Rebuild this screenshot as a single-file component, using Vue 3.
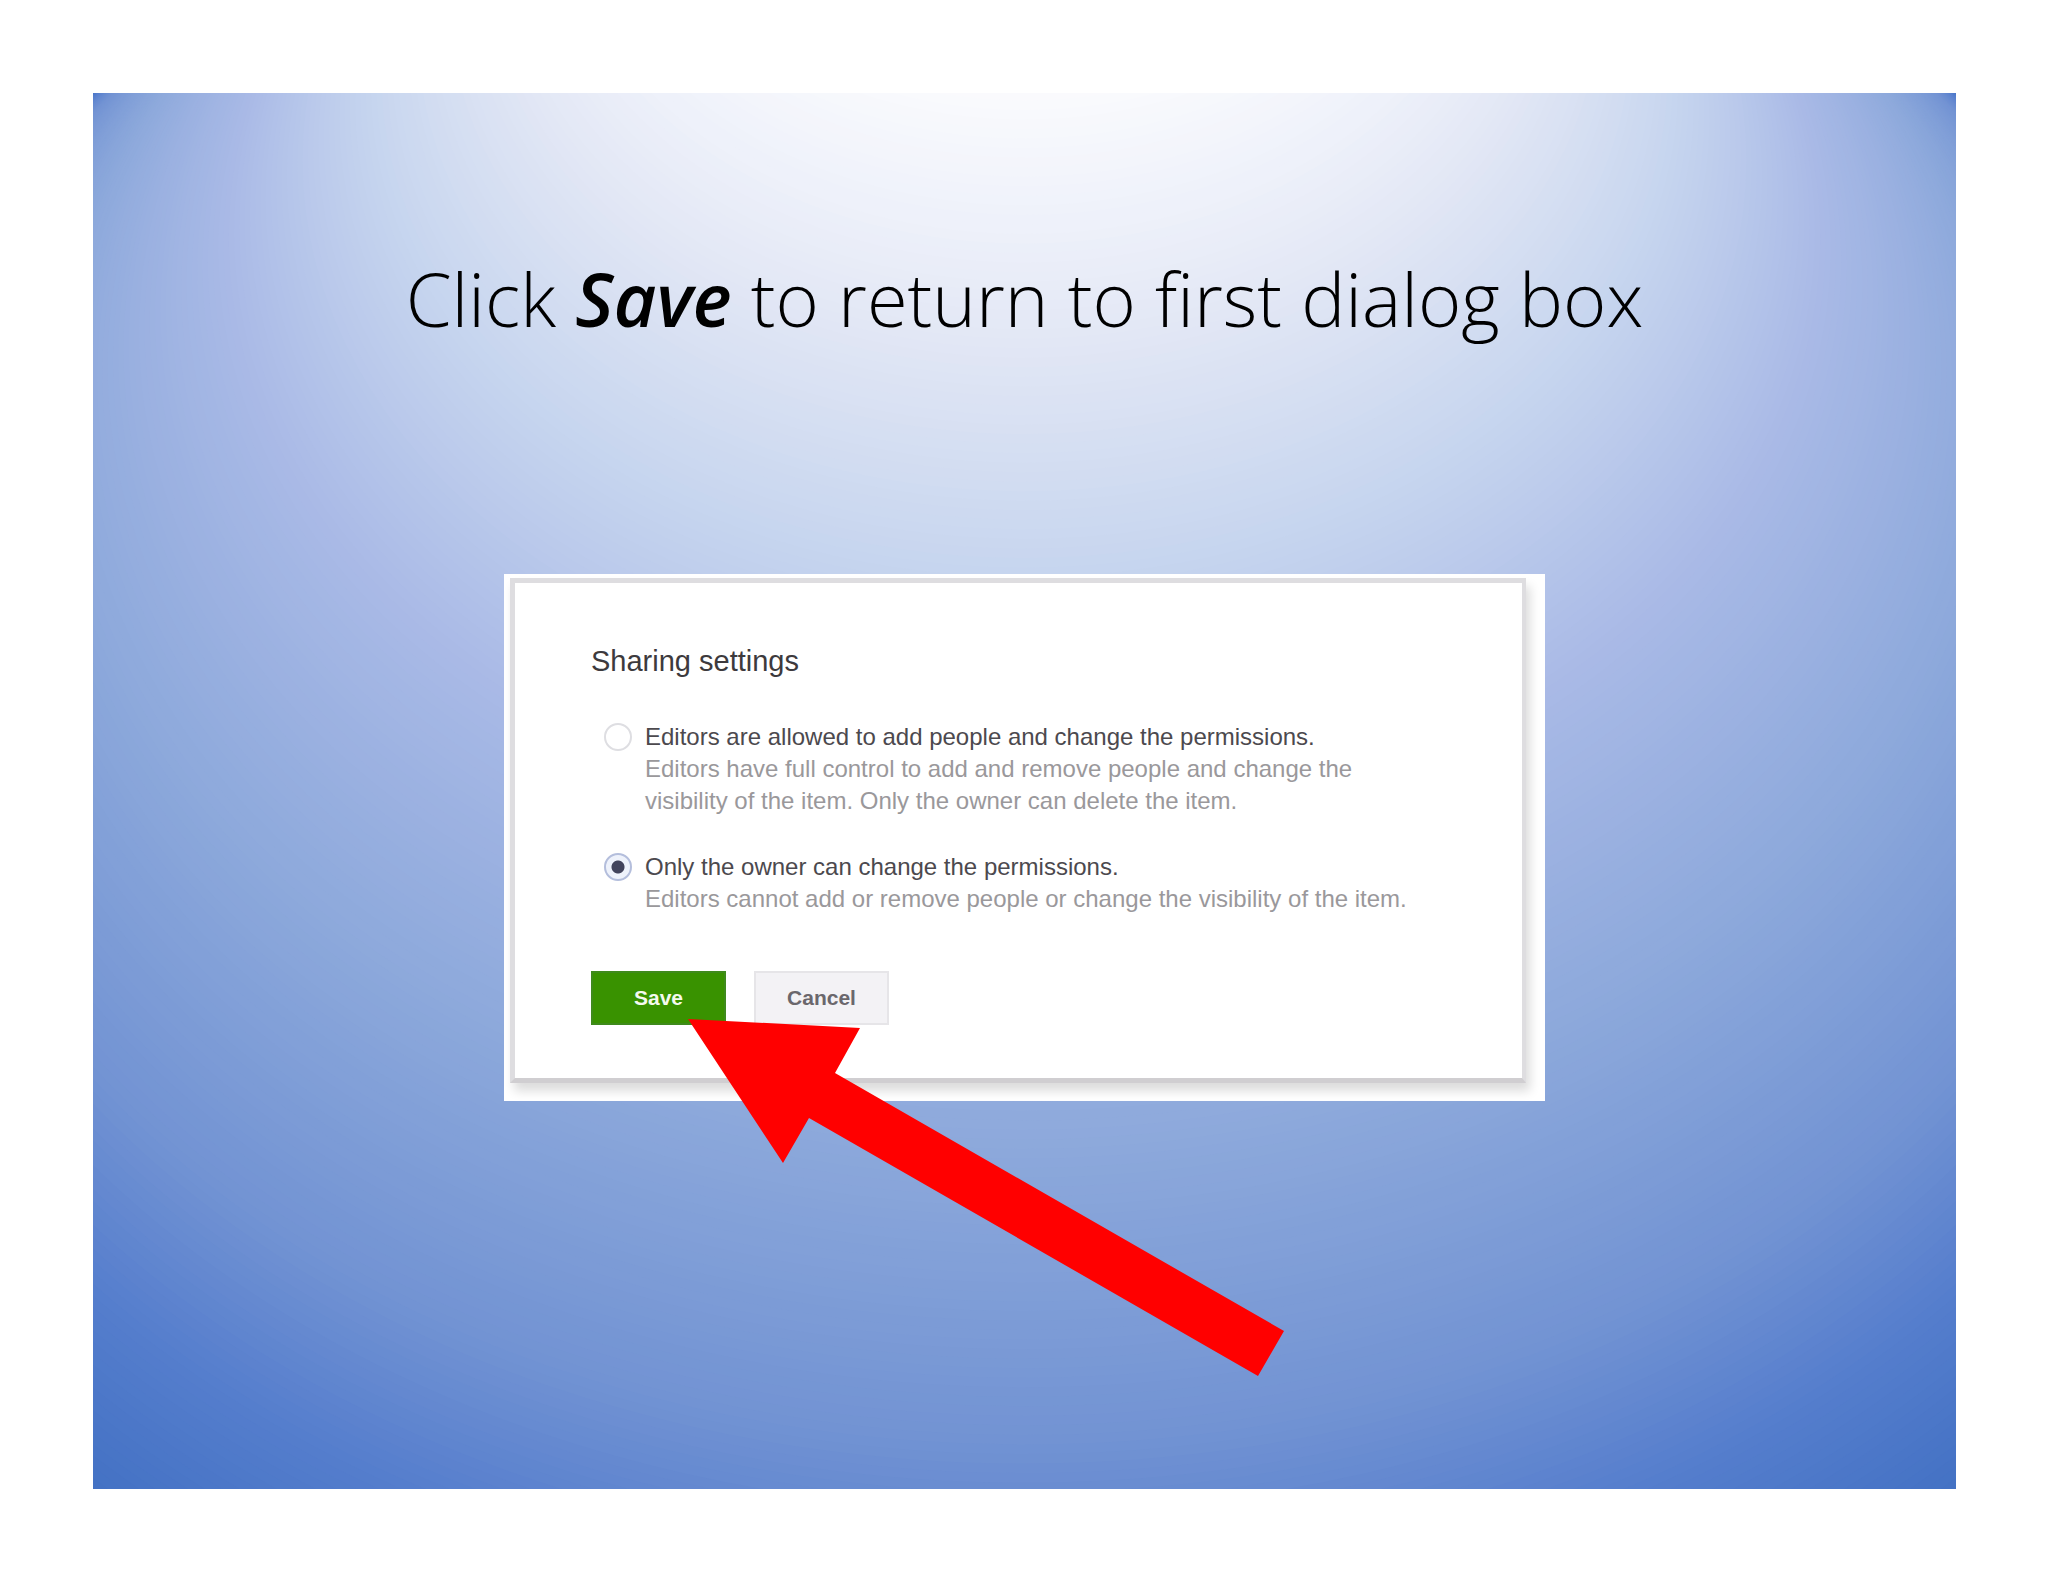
<template>
  <main class="slide">
    <svg
      class="backdrop"
      width="100%"
      height="100%"
      viewBox="0 0 1 1"
      preserveAspectRatio="none"
      aria-hidden="true"
    >
      <rect width="1" height="1" fill="#4472c4" />
      <circle v-for="ring in rings" :key="ring.r" cx="0.5" :cy="ring.cy" :r="ring.r" :fill="ring.color" />
    </svg>

    <h1 class="title">Click <em>Save</em> to return to first dialog box</h1>

    <section class="figure">
      <form class="dialog" @submit.prevent>
        <h2 class="heading">Sharing settings</h2>

        <div class="options">
          <div v-for="option in options" :key="option.id" class="option">
            <input
              :id="option.id"
              v-model="selected"
              class="radio"
              type="radio"
              name="sharing"
              :value="option.id"
            />
            <label class="option-text" :for="option.id">
              <span class="option-title">{{ option.title }}</span>
              <span v-for="line in option.lines" :key="line" class="option-line">{{ line }}</span>
            </label>
          </div>
        </div>

        <div class="actions">
          <button class="btn save" type="submit">Save</button>
          <button class="btn cancel" type="button">Cancel</button>
        </div>
      </form>

      <svg class="arrow" width="596" height="357" viewBox="0 0 596 357" aria-hidden="true">
        <path d="M0 0 L172 9 L147 54 L596 312 L570 357 L121 99 L95 144 Z" fill="#ff0000" />
      </svg>
    </section>
  </main>
</template>

<script setup>
import { ref } from 'vue'

const selected = ref('owner')

const options = [
  {
    id: 'editors',
    title: 'Editors are allowed to add people and change the permissions.',
    lines: [
      'Editors have full control to add and remove people and change the',
      'visibility of the item. Only the owner can delete the item.'
    ]
  },
  {
    id: 'owner',
    title: 'Only the owner can change the permissions.',
    lines: ['Editors cannot add or remove people or change the visibility of the item.']
  }
]

const stops = [
  [0.28, [253, 253, 254]],
  [0.35, [238, 241, 250]],
  [0.41, [223, 229, 244]],
  [0.49, [200, 214, 239]],
  [0.61, [168, 185, 230]],
  [0.74, [140, 168, 219]],
  [0.86, [114, 147, 211]],
  [0.93, [86, 126, 205]],
  [1, [68, 114, 196]]
]

const colorAt = (t) => {
  const i = Math.max(1, stops.findIndex(([at]) => at >= t))
  const [from, a] = stops[i - 1]
  const [to, b] = stops[i]
  const k = (t - from) / (to - from)
  return `rgb(${a.map((c, n) => Math.round(c + (b[n] - c) * k)).join(', ')})`
}

// The glow spreads from a point above the slide, so the rings move down as they
// grow. A CSS gradient can't do that: they are painted from the largest inwards.
const STEPS = 180
const rings = Array.from({ length: STEPS }, (_, i) => {
  const t = 1 - (i / STEPS) * 0.72
  return { cy: t - 0.5, r: t * Math.SQRT1_2, color: colorAt(t) }
})
</script>

<style>
body {
  margin: 0;
  background: #fff;
}
</style>

<style scoped>
.slide {
  position: relative;
  box-sizing: border-box;
  min-height: calc(100vh - 186px);
  margin: 93px 92px 93px 93px;
  padding: 156px 40px 80px;
}

.backdrop {
  position: absolute;
  inset: 0;
}

.title {
  position: relative;
  margin: 0;
  font-family: "Open Sans", "Noto Sans", sans-serif;
  font-size: 74px;
  font-weight: 300;
  line-height: 100px;
  text-align: center;
  color: #000;
}

.title em {
  font-weight: 600;
}

.figure {
  position: relative;
  box-sizing: border-box;
  max-width: 1041px;
  margin: 225px auto 0;
  padding: 4px 19px 18px 6px;
  background: #fff;
}

.dialog {
  box-sizing: border-box;
  padding: 60px 76px 53px;
  border: 5px solid #dedde0;
  border-right-width: 4px;
  border-bottom-color: #d0ced1;
  background: #fff;
  box-shadow: 4px 8px 10px rgba(0, 0, 0, 0.14);
  font-family: "Liberation Sans", Arial, sans-serif;
}

.heading {
  margin: 0;
  font-size: 29px;
  font-weight: 400;
  line-height: 36px;
  color: #3d3a3d;
}

.options {
  display: flex;
  flex-direction: column;
  gap: 34px;
  margin-top: 42px;
}

.option {
  display: flex;
  gap: 13px;
  padding-left: 13px;
}

.radio {
  appearance: none;
  flex: none;
  box-sizing: border-box;
  width: 28px;
  height: 28px;
  margin: 2px 0 0;
  border: 2px solid #dedee2;
  border-radius: 50%;
  background: #fff;
}

.radio:checked {
  border-color: #b4bedc;
  background: radial-gradient(circle, #42445c 0 6px, #eef2fb 7px);
}

.option-text {
  display: flex;
  flex-direction: column;
  font-size: 24px;
  line-height: 32px;
}

.option-title {
  color: #4c494e;
}

.option-line {
  color: #9a989b;
}

.actions {
  display: flex;
  gap: 28px;
  margin-top: 56px;
}

.btn {
  box-sizing: border-box;
  width: 135px;
  height: 54px;
  padding: 0;
  border: 2px solid #e6e5e8;
  font-family: inherit;
  font-size: 21px;
  font-weight: 700;
}

.save {
  border-color: #3f8a1c;
  background: #399200;
  color: #f4faef;
}

.cancel {
  background: #f3f2f5;
  color: #6a676c;
}

.arrow {
  position: absolute;
  top: 445px;
  left: 184px;
}
</style>
